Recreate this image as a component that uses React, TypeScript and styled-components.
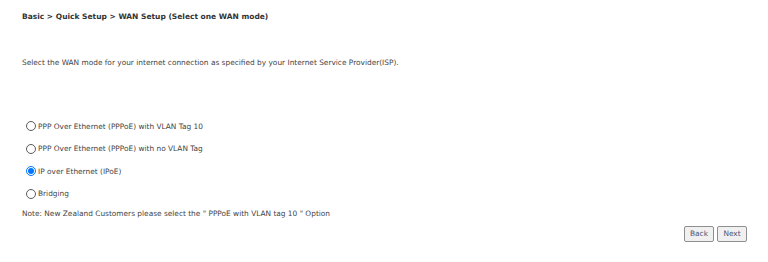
import { createGlobalStyle, styled } from 'styled-components';

const GlobalStyle = createGlobalStyle`
  html, body {
    margin: 0;
    padding: 0;
    background: #ffffff;
  }
  body {
    font-family: "DejaVu Sans", Verdana, sans-serif;
    color: #444444;
  }
`;

const Page = styled.div`
  width: 768px;
  height: 262px;
  padding: 12px 21px 0 22px;
  box-sizing: border-box;
  display: flex;
  flex-direction: column;
`;

const Title = styled.div`
  font-size: 7.5px;
  font-weight: bold;
  line-height: 10px;
  color: #333;
`;

const Intro = styled.div`
  font-size: 7.4px;
  line-height: 10px;
  margin-top: 36px;
`;

const Options = styled.div`
  display: flex;
  flex-direction: column;
  gap: 10.5px;
  margin-top: 52px;
`;

const OptionRow = styled.label`
  display: flex;
  align-items: center;
  gap: 2px;
  font-size: 7.4px;
  height: 12px;
  padding-left: 4px;
`;

const Radio = styled.span<{ $checked?: boolean }>`
  width: 10px;
  height: 10px;
  border-radius: 50%;
  box-sizing: border-box;
  border: 1px solid ${p => (p.$checked ? '#0075ff' : '#5a5a5a')};
  background: #fff;
  display: flex;
  align-items: center;
  justify-content: center;

  &::after {
    content: '';
    display: ${p => (p.$checked ? 'block' : 'none')};
    width: 6px;
    height: 6px;
    border-radius: 50%;
    background: #0075ff;
  }
`;

const Note = styled.div`
  font-size: 7.4px;
  line-height: 10px;
  margin-top: 9px;
`;

const Actions = styled.div`
  display: flex;
  justify-content: flex-end;
  gap: 3px;
  margin-top: 7px;
`;

const Button = styled.button`
  font-family: "DejaVu Sans", Verdana, sans-serif;
  font-size: 7.4px;
  color: #4b5670;
  background: #f0f0f0;
  border: 1px solid #8f8f8f;
  border-radius: 2px;
  height: 16px;
  width: 30px;
  padding: 0;
`;

const options = [
  { label: 'PPP Over Ethernet (PPPoE) with VLAN Tag 10', checked: false },
  { label: 'PPP Over Ethernet (PPPoE) with no VLAN Tag', checked: false },
  { label: 'IP over Ethernet (IPoE)', checked: true },
  { label: 'Bridging', checked: false },
];

export default function App() {
  return (
    <>
      <GlobalStyle />
      <Page>
        <Title>Basic &gt; Quick Setup &gt; WAN Setup (Select one WAN mode)</Title>
        <Intro>
          Select the WAN mode for your internet connection as specified by your Internet Service Provider(ISP).
        </Intro>
        <Options>
          {options.map(o => (
            <OptionRow key={o.label}>
              <Radio $checked={o.checked} />
              {o.label}
            </OptionRow>
          ))}
        </Options>
        <Note>Note: New Zealand Customers please select the " PPPoE with VLAN tag 10 " Option</Note>
        <Actions>
          <Button>Back</Button>
          <Button>Next</Button>
        </Actions>
      </Page>
    </>
  );
}
